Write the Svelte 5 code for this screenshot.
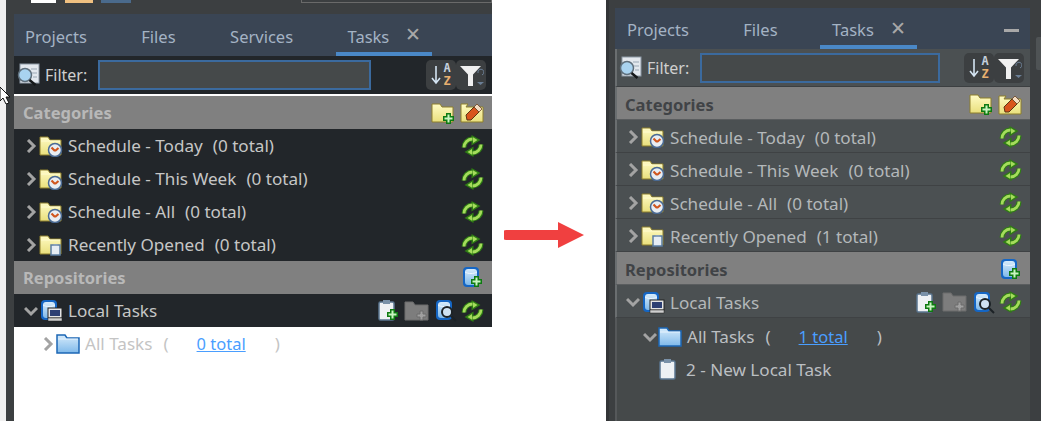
<script lang="ts">
  // Two snapshots of the same Tasks panel, before and after a task was added.
  const schedule = ['Schedule - Today', 'Schedule - This Week', 'Schedule - All'];

  const before = {
    theme: 'black',
    tabs: ['Projects', 'Files', 'Services'],
    recent: 0,
    expanded: false,
    total: 0
  };
  const after = {
    theme: 'grey',
    tabs: ['Projects', 'Files'],
    recent: 1,
    expanded: true,
    total: 1
  };
</script>

{#snippet chevron(open)}
  <svg class="chev" width="14" height="14" viewBox="0 0 14 14">
    {#if open}
      <path d="M1 4l6 6 6-6" fill="none" stroke="#a3a3a3" stroke-width="3" />
    {:else}
      <path d="M4 1l6 6-6 6" fill="none" stroke="#a3a3a3" stroke-width="3" />
    {/if}
  </svg>
{/snippet}

{#snippet plus()}
  <path d="M13 10h5v3h3v5h-3v3h-5v-3h-3v-5h3z" fill="#0e7a12" />
  <path d="M14.500 11.500h2v3h3v2h-3v3h-2v-3h-3v-2h3z" fill="#c9f5c0" />
{/snippet}

{#snippet folder(badge)}
  <svg class="ico" width="24" height="22" viewBox="0 0 24 22">
    <path d="M1 2h8l2 3h11v15H1z" fill="url(#yellow)" stroke="#8d7f2c" />
    <path d="M2 6h19" stroke="#fffbd0" />
    {#if badge === 'clock'}
      <circle cx="16" cy="15" r="6.500" fill="#e8edf2" stroke="#4a6a94" stroke-width="1.500" />
      <path d="M16 16l-3.500-3.500M16 16l3.500-3" stroke="#d0561e" stroke-width="2.200" />
    {:else}
      <path d="M12 11h9v10h-9z" fill="#e6edf4" stroke="#5b7ea3" stroke-width="1.500" />
      <path d="M14.500 10h4v2h-4z" fill="#8aa2bc" />
    {/if}
  </svg>
{/snippet}

{#snippet refreshHalf()}
  <path d="M3 12.500A8.500 8.500 0 0 1 11 4" fill="none" stroke="#2f7d14" stroke-width="5" />
  <path d="M10.500 0l9 5-9 5.500z" fill="#2f7d14" />
  <path d="M3 12.500A8.500 8.500 0 0 1 11.500 4" fill="none" stroke="#a5dc5c" stroke-width="2.800" />
  <path d="M12 2.200l4.500 2.800-4.500 3z" fill="#a5dc5c" />
{/snippet}

{#snippet refresh()}
  <svg class="ico" width="23" height="22" viewBox="0 0 23 22">
    {@render refreshHalf()}
    <g transform="rotate(180 11.500 11)">{@render refreshHalf()}</g>
  </svg>
{/snippet}

{#snippet cylinder()}
  <rect x="2" y="1" width="16" height="20" rx="4" fill="#1566c4" />
  <rect x="4" y="3" width="12" height="16" rx="3" fill="url(#blue)" />
  <path d="M4 6c3 2 9 2 12 0" fill="none" stroke="#eef7ff" />
{/snippet}

{#snippet repoAdd()}
  <svg class="ico" width="23" height="23" viewBox="0 0 23 23">
    {@render cylinder()}
    {@render plus()}
  </svg>
{/snippet}

{#snippet repoLocal()}
  <svg class="ico" width="24" height="23" viewBox="0 0 24 23">
    {@render cylinder()}
    <rect x="9" y="9" width="14" height="10" fill="#e4e4e4" stroke="#222" />
    <rect x="11" y="11" width="10" height="6" fill="#2d3f73" />
    <rect x="9" y="19" width="14" height="3" fill="#cfcfcf" stroke="#222" stroke-width="0.500" />
  </svg>
{/snippet}

{#snippet blueFolder()}
  <svg class="ico" width="24" height="22" viewBox="0 0 24 22">
    <path d="M1 2h8l2 3h12v15H1z" fill="url(#blue)" stroke="#1c67b5" stroke-width="1.500" />
    <path d="M2 6h20" stroke="#e6f3ff" />
  </svg>
{/snippet}

{#snippet clipboard(add)}
  <svg class="ico" width="23" height="23" viewBox="0 0 23 23">
    <rect x="2" y="3" width="15" height="18" rx="1.500" fill="#eef1f4" stroke="#5b7690" stroke-width="1.500" />
    <rect x="6" y="1" width="7" height="4" fill="#7a91a8" />
    {#if add}{@render plus()}{/if}
  </svg>
{/snippet}

{#snippet greyFolderAdd()}
  <svg class="ico" width="26" height="22" viewBox="0 0 26 22">
    <path d="M1 2h8l2 3h13v15H1z" fill="#7d7d7d" stroke="#6c6c6c" />
    <path d="M16 11h3v3h3v3h-3v3h-3v-3h-3v-3h3z" fill="#a0a0a0" stroke="#6c6c6c" />
  </svg>
{/snippet}

{#snippet repoSearch()}
  <svg class="ico" width="23" height="23" viewBox="0 0 23 23">
    {@render cylinder()}
    <circle cx="13" cy="13" r="5" fill="#cfe2f2" stroke="#1c2226" stroke-width="2" />
    <path d="M17 17l5 5" stroke="#1c2226" stroke-width="2" />
  </svg>
{/snippet}

{#snippet folderAdd()}
  <svg class="ico" width="24" height="22" viewBox="0 0 24 22">
    <path d="M1 2h8l2 3h11v15H1z" fill="url(#yellow)" stroke="#8d7f2c" />
    <g transform="translate(2 1)">{@render plus()}</g>
  </svg>
{/snippet}

{#snippet folderEdit()}
  <svg class="ico" width="24" height="23" viewBox="0 0 24 23">
    <path d="M1 3h7l-2 3h17v15H1z" fill="url(#yellow)" stroke="#8d7f2c" />
    <path d="M6 14l8-8 5 5-8 8-4 0z" fill="#d8541d" stroke="#5d3413" />
    <path d="M14 6l3-3 5 5-3 3z" fill="#f3dcc2" stroke="#5d3413" stroke-width="0.700" />
  </svg>
{/snippet}

{#snippet panel(p)}
  <section class="panel {p.theme}">
    <div class="tabs">
      {#each p.tabs as t}
        <span class="tab">{t}</span>
      {/each}
      <span class="tab active">Tasks <span class="x">✕</span></span>
      <span class="min"></span>
    </div>

    <div class="filter">
      <svg class="ico" width="24" height="24" viewBox="0 0 24 24">
        <rect x="4" y="1" width="19" height="19" fill="#e3e8ee" stroke="#8d99a6" />
        <path d="M15 6h6M16 10h5M17 14h4" stroke="#9aa7b4" />
        <circle cx="9" cy="12" r="6.500" fill="#a9d3f0" stroke="#5f6f7c" stroke-width="1.500" />
        <path d="M13.500 17l6 5" stroke="#15181a" stroke-width="2.500" />
      </svg>
      <span class="flabel">Filter:</span>
      <input class="finput" aria-label="Filter" />
      <div class="ftools">
        <span class="fbtn sort">
          <svg width="10" height="20" viewBox="0 0 10 20">
            <path d="M5 1v17M1 13l4 5 4-5" fill="none" stroke="#d4e4f2" stroke-width="1.600" />
          </svg>
          <span class="az"><b class="a">A</b><b class="z">Z</b></span>
        </span>
        <span class="fbtn funnel">
          <svg width="25" height="24" viewBox="0 0 25 24">
            <path d="M1 3h21l-8 8.500V23H9V11.500z" fill="#f0f0f0" />
            <path d="M19 10a3 3 0 1 1 4 2" fill="none" stroke="#6b7f96" />
            <path d="M18 19h7l-3.500 3z" fill="#6b7f96" />
          </svg>
        </span>
      </div>
    </div>

    <div class="head">
      <span>Categories</span>
      <span class="tools">{@render folderAdd()}{@render folderEdit()}</span>
    </div>
    {#each schedule as name}
      <div class="row">
        {@render chevron(false)}
        {@render folder('clock')}
        <span class="label">{name}<span class="count">(0 total)</span></span>
        <span class="tools">{@render refresh()}</span>
      </div>
    {/each}
    <div class="row">
      {@render chevron(false)}
      {@render folder('doc')}
      <span class="label">Recently Opened<span class="count">({p.recent} total)</span></span>
      <span class="tools">{@render refresh()}</span>
    </div>

    <div class="head">
      <span>Repositories</span>
      <span class="tools">{@render repoAdd()}</span>
    </div>
    <div class="row">
      {@render chevron(true)}
      {@render repoLocal()}
      <span class="label">Local Tasks</span>
      <span class="tools actions">
        {@render clipboard(true)}
        {@render greyFolderAdd()}
        {@render repoSearch()}
        {@render refresh()}
      </span>
    </div>

    <div class="tree">
      <div class="leaf lvl1">
        {@render chevron(p.expanded)}
        {@render blueFolder()}
        <span class="label">All Tasks</span>
        <span class="paren open">(</span>
        <a class="link" href="#tasks">{p.total} total</a>
        <span class="paren close">)</span>
      </div>
      {#if p.expanded}
        <div class="leaf lvl2">
          {@render clipboard(false)}
          <span class="label">2 - New Local Task</span>
        </div>
      {/if}
    </div>
  </section>
{/snippet}

<svg class="defs" width="0" height="0" aria-hidden="true">
  <defs>
    <linearGradient id="yellow" x1="0" y1="0" x2="0" y2="1">
      <stop offset="0" stop-color="#fffbc4" />
      <stop offset="1" stop-color="#e9df7c" />
    </linearGradient>
    <linearGradient id="blue" x1="0" y1="0" x2="0" y2="1">
      <stop offset="0" stop-color="#d6ebfb" />
      <stop offset="1" stop-color="#7fb9ea" />
    </linearGradient>
  </defs>
</svg>

<div class="page">
  <div class="shot before">
    <div class="gap"></div>
    <div class="col">
      <div class="topbar">
        <i class="tb w"></i><i class="tb o"></i><i class="tb b"></i>
        <i class="tb field"></i>
      </div>
      {@render panel(before)}
    </div>
    <svg class="cursor" width="12" height="20" viewBox="0 0 12 20">
      <path d="M0 1l10 10H6l3 6-3 1-3-6-3 3z" fill="#fff" stroke="#111" />
    </svg>
  </div>

  <div class="gutter">
    <svg width="82" height="28" viewBox="0 0 82 28">
      <path d="M2 9h52V1l26 13-26 13v-8H2a5 5 0 0 1 0-10z" fill="#f04040" />
    </svg>
  </div>

  <div class="shot after">
    <div class="col">
      <div class="topbar"></div>
      {@render panel(after)}
    </div>
    <div class="rail"><span class="thumb"></span></div>
  </div>
</div>

<style>
  :global(body) {
    margin: 0;
    background: #fff;
  }
  .defs {
    position: absolute;
  }
  .page {
    display: flex;
    width: 1041px;
    height: 421px;
    overflow: hidden;
    font-family: "Noto Sans", "Open Sans", sans-serif;
    font-size: 17.1px;
  }
  .shot {
    display: flex;
    position: relative;
    height: 421px;
    background: #3c3f41;
    overflow: hidden;
  }
  .before {
    width: 492px;
    box-shadow: inset 6px 0 0 #f0f0f0;
  }
  .before .gap {
    width: 14px;
    flex: none;
  }
  .after {
    width: 435px;
    padding-left: 9px;
    box-sizing: border-box;
    box-shadow: inset 3px 0 0 #333537;
  }
  .col {
    flex: 1;
    display: flex;
    flex-direction: column;
    min-width: 0;
  }
  .gutter {
    width: 114px;
    box-sizing: border-box;
    padding: 221px 0 0 12px;
    background: #fff;
  }
  .topbar {
    height: 14px;
    flex: none;
    display: flex;
    align-items: flex-start;
  }
  .after .topbar {
    height: 8px;
  }
  .tb {
    height: 3px;
    display: block;
    box-sizing: border-box;
  }
  .tb.w {
    width: 25px;
    margin-left: 17px;
    background: #fff;
  }
  .tb.o {
    width: 28px;
    margin-left: 9px;
    background: #f0c080;
  }
  .tb.b {
    width: 30px;
    margin-left: 8px;
    background: #4a6a8c;
  }
  .tb.field {
    flex: 1;
    margin-left: 170px;
    border: 1px solid #6a6a6a;
    border-top: 0;
  }
  .cursor {
    position: absolute;
    left: 0;
    top: 86px;
  }
  .rail {
    width: 11px;
    flex: none;
    padding: 37px 0 0 6px;
    box-sizing: border-box;
  }
  .thumb {
    display: block;
    height: 33px;
    background: #4f5355;
    border-radius: 2px 0 0 2px;
  }

  .panel {
    flex: 1;
    display: flex;
    flex-direction: column;
    color: #c4c4c4;
  }
  .tabs {
    display: flex;
    align-items: stretch;
    gap: 54.5px;
    height: 42px;
    padding-left: 11px;
    flex: none;
    background: #3a4554;
    box-sizing: border-box;
    color: #a4b3c4;
    font-size: 16.5px;
  }
  .after .tabs {
    height: 41px;
    padding-left: 12px;
  }
  .tab {
    display: flex;
    align-items: center;
    padding: 4px 0 0;
    line-height: 1;
  }
  .tab.active {
    padding: 8px 11px 0 12px;
    margin-left: -12px;
    border-bottom: 4px solid #4a88c7;
    gap: 16px;
  }
  .x {
    font-size: 19px;
    color: #a8a8a8;
    margin-bottom: 5px;
  }
  .min {
    margin: 21px 11px 0 auto;
    width: 15px;
    height: 3px;
    background: #a8a8a8;
  }
  .filter {
    display: flex;
    align-items: center;
    height: 38px;
    flex: none;
    padding-left: 2px;
    box-sizing: border-box;
    background: #22262a;
  }
  .after .filter {
    background: #4b5052;
    border-left: 2px solid #6a6e70;
    padding-left: 1px;
    border-bottom: 1px solid #3c3f41;
  }
  .flabel {
    margin-left: 5px;
    width: 53px;
    font-size: 16px;
    color: #cfcfcf;
    flex: none;
  }
  .finput {
    width: 273px;
    height: 30px;
    box-sizing: border-box;
    flex: none;
    background: #45494a;
    border: 2px solid #3b6a9e;
    padding: 0;
  }
  .after .finput {
    width: 240px;
  }
  .ftools {
    display: flex;
    margin-left: auto;
    margin-right: 6px;
  }
  .fbtn {
    display: flex;
    align-items: center;
    justify-content: center;
    width: 30px;
    height: 30px;
    border-radius: 5px;
    background: #3c3f41;
  }
  .sort {
    gap: 2px;
  }
  .az {
    display: flex;
    flex-direction: column;
    font: bold 12px/13px "DejaVu Sans Mono", monospace;
  }
  .a {
    color: #c4cfdc;
  }
  .z {
    color: #e8b070;
  }
  .head {
    display: flex;
    align-items: center;
    justify-content: space-between;
    height: 33px;
    flex: none;
    padding: 0 8px 0 9px;
    box-sizing: border-box;
    background: #808080;
    color: #b8b8b8;
    font-weight: 700;
    font-size: 16.5px;
  }
  .before .filter + .head {
    height: 35px;
    border-top: 2px solid #fff;
  }
  .after .head {
    color: #404346;
    border-left: 2px solid #6a6e70;
    border-bottom: 1px solid #5a5d5f;
    padding: 2px 8px 0;
  }
  .row {
    display: flex;
    align-items: center;
    height: 33px;
    flex: none;
    padding: 0 8px 0 10px;
    box-sizing: border-box;
    background: #22262a;
    color: #c6c6c6;
  }
  .after .row {
    background: #4b5052;
    border-left: 2px solid #6a6e70;
    border-bottom: 1px solid #3f4244;
    padding: 2px 8px 0 9px;
    color: #b4b8ba;
  }
  .chev {
    flex: none;
    margin-right: 1px;
  }
  .ico {
    flex: none;
    display: block;
  }
  .label {
    margin-left: 5px;
    white-space: nowrap;
  }
  .count {
    margin-left: 10px;
  }
  .tools {
    margin-left: auto;
    display: flex;
    align-items: center;
    gap: 5px;
  }
  .actions {
    gap: 4px;
  }
  .tree {
    flex: 1;
    background: #fff;
    color: #c4c4c4;
  }
  .after .tree {
    background: #45494a;
    color: #bbbfc2;
    border-left: 2px solid #55585a;
    padding-top: 2px;
  }
  .leaf {
    display: flex;
    align-items: center;
    height: 33px;
    padding-left: 27px;
  }
  .after .leaf {
    padding-left: 26px;
  }
  .after .lvl2 {
    padding-left: 41px;
  }
  .paren {
    white-space: pre;
  }
  .open {
    margin-left: 11px;
  }
  .link {
    margin-left: 28px;
    color: #4a9eff;
    font-size: 16.5px;
  }
  .close {
    margin-left: 29px;
  }
</style>
